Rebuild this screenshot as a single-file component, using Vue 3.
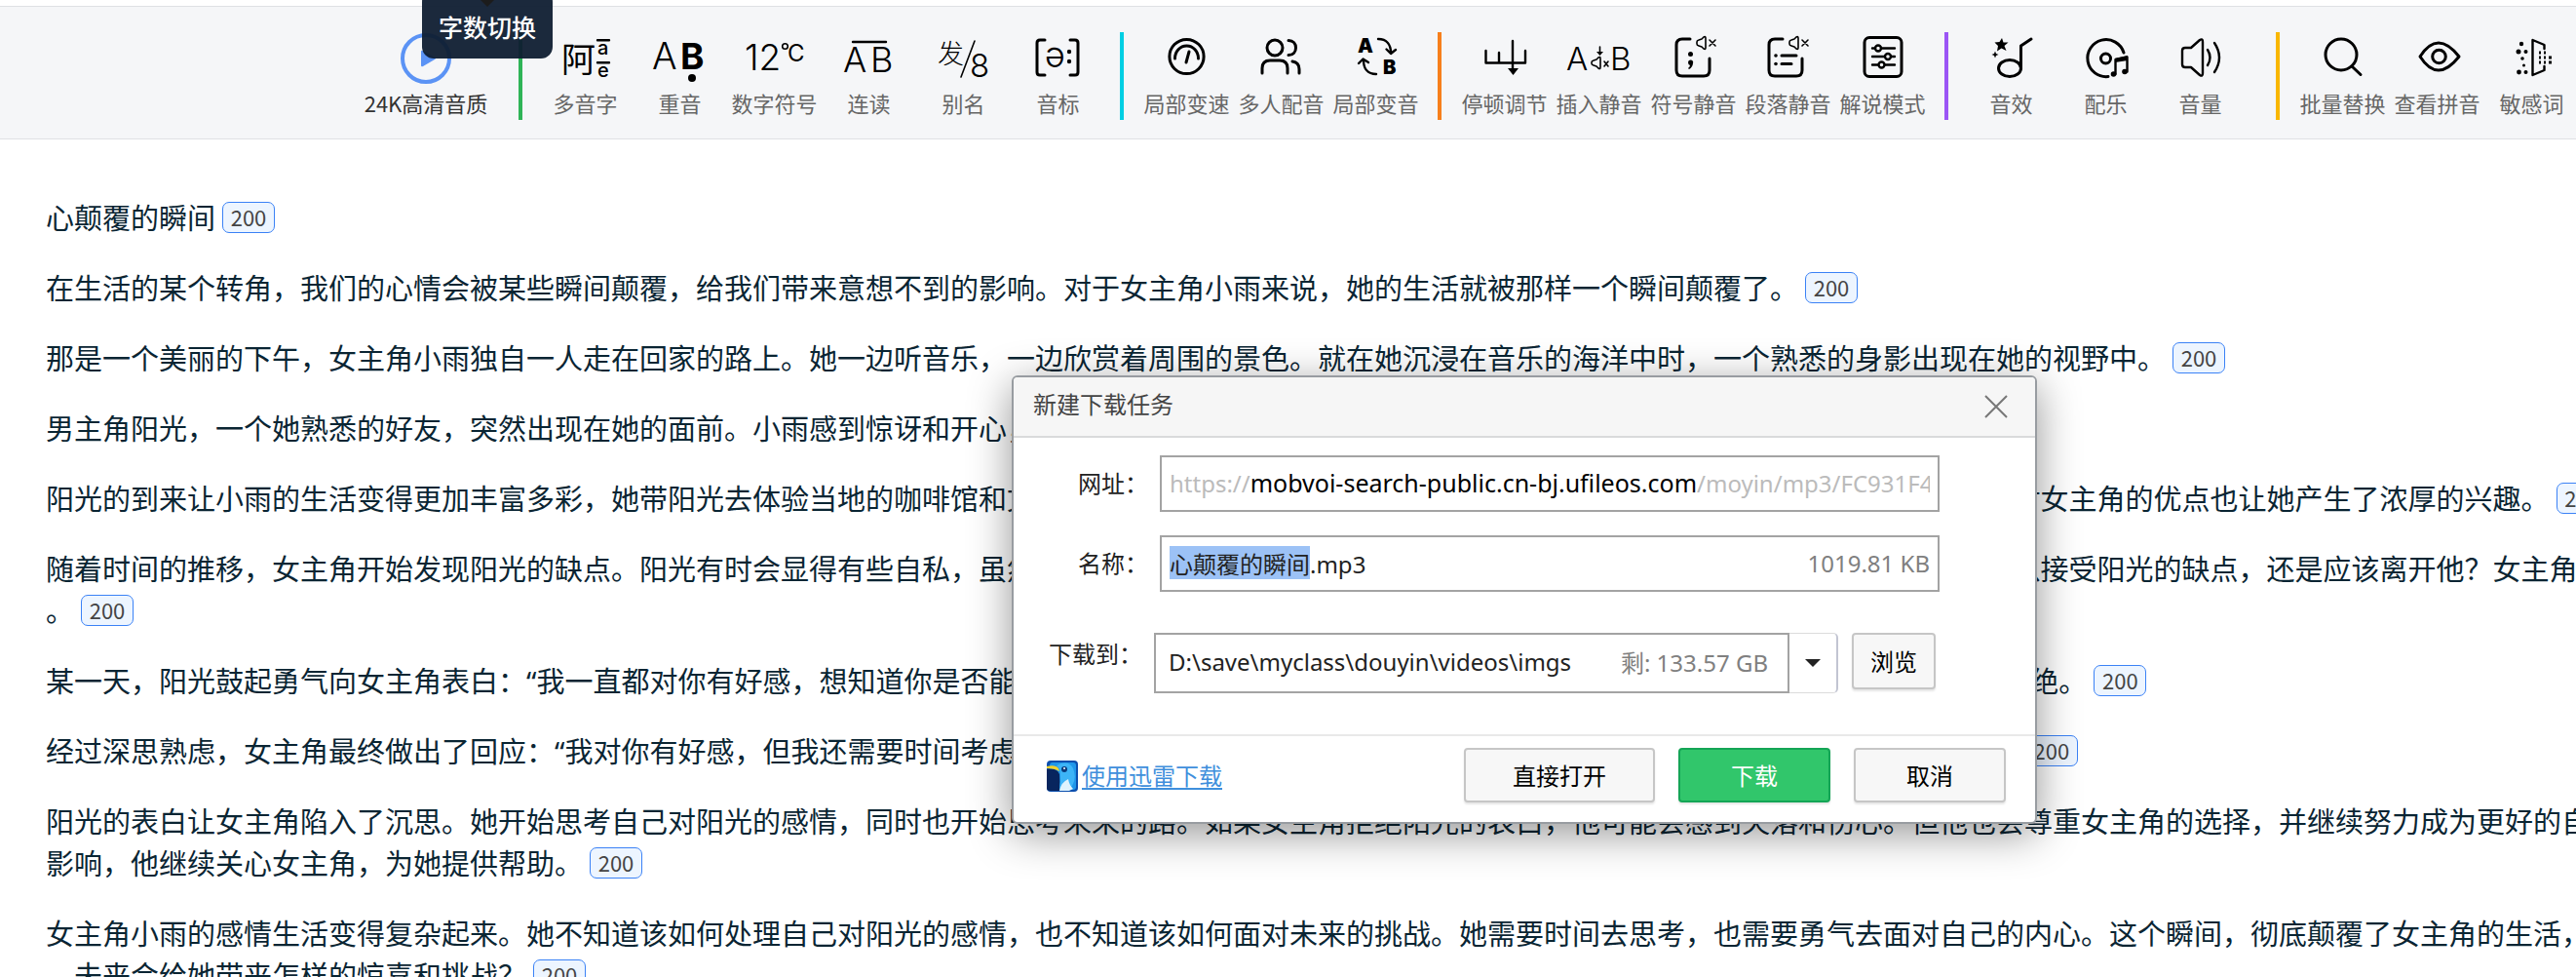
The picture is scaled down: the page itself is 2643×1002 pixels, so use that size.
<script setup>
import { onMounted, ref } from 'vue'

const groups = [
  {
    color: '#2fb457',
    items: [
      { label: '多音字', icon: 'polyphone' },
      { label: '重音', icon: 'stress' },
      { label: '数字符号', icon: 'number' },
      { label: '连读', icon: 'liaison' },
      { label: '别名', icon: 'alias' },
      { label: '音标', icon: 'phonetic' }
    ]
  },
  {
    color: '#00cfe3',
    items: [
      { label: '局部变速', icon: 'speed' },
      { label: '多人配音', icon: 'people' },
      { label: '局部变音', icon: 'voice' }
    ]
  },
  {
    color: '#f77f1c',
    items: [
      { label: '停顿调节', icon: 'pause' },
      { label: '插入静音', icon: 'insert' },
      { label: '符号静音', icon: 'symbol' },
      { label: '段落静音', icon: 'paragraph' },
      { label: '解说模式', icon: 'narrate' }
    ]
  },
  {
    color: '#9b55f5',
    wide: true,
    items: [
      { label: '音效', icon: 'effect' },
      { label: '配乐', icon: 'music' },
      { label: '音量', icon: 'volume' }
    ]
  },
  {
    color: '#f9b700',
    items: [
      { label: '批量替换', icon: 'search' },
      { label: '查看拼音', icon: 'eye' },
      { label: '敏感词', icon: 'filter' }
    ]
  }
]

const paragraphs = [
  ['心颠覆的瞬间'],
  ['在生活的某个转角，我们的心情会被某些瞬间颠覆，给我们带来意想不到的影响。对于女主角小雨来说，她的生活就被那样一个瞬间颠覆了。'],
  ['那是一个美丽的下午，女主角小雨独自一人走在回家的路上。她一边听音乐，一边欣赏着周围的景色。就在她沉浸在音乐的海洋中时，一个熟悉的身影出现在她的视野中。'],
  ['男主角阳光，一个她熟悉的好友，突然出现在她的面前。小雨感到惊讶和开心，他们一起聊天，分享彼此的生活和梦想。'],
  ['阳光的到来让小雨的生活变得更加丰富多彩，她带阳光去体验当地的咖啡馆和文化景点，两个人一起度过了3段美好的时光。她慢慢地开始依赖着他，而阳光面对女主角的优点也让她产生了浓厚的兴趣。'],
  ['随着时间的推移，女主角开始发现阳光的缺点。阳光有时会显得有些自私，虽然他很关心她，但是这1点让她感到困惑。她反复地询问自己的内心，究竟是否可以接受阳光的缺点，还是应该离开他？女主角', '。'],
  ['某一天，阳光鼓起勇气向女主角表白：“我一直都对你有好感，想知道你是否能给我一个机会，和我一起走下去。”女主角感到十分惊讶，她不知道应该接受还是拒绝。'],
  ['经过深思熟虑，女主角最终做出了回应：“我对你有好感，但我还需要时间考虑。我希望我们能先做朋友，再多了解彼此1段时间。”阳光表示理解，愿意等待她。'],
  ['阳光的表白让女主角陷入了沉思。她开始思考自己对阳光的感情，同时也开始思考未来的路。如果女主角拒绝阳光的表白，他可能会感到失落和伤心。但他也会尊重女主角的选择，并继续努力成为更好的自', '影响，他继续关心女主角，为她提供帮助。'],
  ['女主角小雨的感情生活变得复杂起来。她不知道该如何处理自己对阳光的感情，也不知道该如何面对未来的挑战。她需要时间去思考，也需要勇气去面对自己的内心。这个瞬间，彻底颠覆了女主角的生活，', '。未来会给她带来怎样的惊喜和挑战？']
]

const domain = ref('mobvoi-search-public.cn-bj.ufileos.com')
const fileName = ref('心颠覆的瞬间.mp3')
const folder = ref('D:\\save\\myclass\\douyin\\videos\\imgs')
const nameInput = ref(null)

onMounted(() => {
  nameInput.value.focus()
  nameInput.value.setSelectionRange(0, fileName.value.lastIndexOf('.'))
})
</script>

<template>
  <div class="page">
    <header class="toolbar">
      <button class="tool quality" type="button">
        <svg class="icon" viewBox="0 0 60 56">
          <circle cx="30" cy="28" r="24" fill="none" stroke="#5b93f5" stroke-width="4" />
          <path d="M25 21q0-2 2-1l12 7q2 1 0 2l-12 7q-2 1-2-1z" fill="#5b93f5" />
        </svg>
        <span>24K高清音质</span>
      </button>
      <nav v-for="g in groups" :key="g.color" class="group" :class="{ wide: g.wide }">
        <i class="divider" :style="{ background: g.color }"></i>
        <button v-for="t in g.items" :key="t.label" class="tool" type="button">
          <svg class="icon" viewBox="0 0 60 56">
            <g v-if="t.icon === 'polyphone'">
              <text x="5" y="42" class="cjk" font-size="35">阿</text>
              <path d="M42 9.2h12M42 32.2h12" class="s2" />
              <text x="42" y="24" class="med" font-size="20">a</text>
              <text x="42" y="47" class="med" font-size="20">e</text>
            </g>
            <g v-else-if="t.icon === 'stress'">
              <text x="1" y="39" class="thin" font-size="38">A</text>
              <text x="30" y="39" class="bold" font-size="37">B</text>
              <circle cx="42" cy="48" r="4" />
            </g>
            <g v-else-if="t.icon === 'number'">
              <text x="-1" y="40" class="thin" font-size="37">12</text>
              <circle cx="40.500" cy="15.500" r="2.800" class="s1" />
              <text x="43" y="31" class="reg" font-size="24">C</text>
            </g>
            <g v-else-if="t.icon === 'liaison'">
              <path d="M13 11h34" class="s2" />
              <text x="3" y="42" class="thin" font-size="36">A</text>
              <text x="31" y="42" class="thin" font-size="36">B</text>
            </g>
            <g v-else-if="t.icon === 'alias'">
              <text x="3" y="33" class="cjkl" font-size="27">发</text>
              <path d="M41 10L27 47" class="s1" />
              <text x="36" y="47" class="thin" font-size="33">8</text>
            </g>
            <g v-else-if="t.icon === 'phonetic'">
              <path d="M16 9h-5q-3 0-3 3v30q0 3 3 3h5M42 9h5q3 0 3 3v30q0 3-3 3h-5" class="s3" />
              <text x="16" y="37" class="thin" font-size="36">ə</text>
              <circle cx="41" cy="21" r="2.200" /><circle cx="41" cy="31" r="2.200" />
            </g>
            <g v-else-if="t.icon === 'speed'">
              <circle cx="29.500" cy="26" r="17.600" class="s3" />
              <path d="M17.500 28a12 13 0 1 1 24 0M29 32l3-11" class="s3" />
            </g>
            <g v-else-if="t.icon === 'people'">
              <circle cx="23" cy="17" r="8" class="s3" />
              <path d="M10 43v-5q0-8 8-8h10q8 0 8 8v5M37 9.500c10 0 10 15 0 15M41 31q7 1 7 8v4" class="s3" />
            </g>
            <g v-else-if="t.icon === 'voice'">
              <text x="11" y="22" class="black" font-size="20">A</text>
              <text x="37" y="44" class="black" font-size="20">B</text>
              <path d="M32 8c9 0 13 6 13 14M40.500 18.500l4.500 4.500 5-4M30 44c-9 0-13-6-13-14M12 33l4.500-4.500 5.500 3.500" class="s2" />
            </g>
            <g v-else-if="t.icon === 'pause'">
              <path d="M10.500 20v12.500h40.500V20M24 22v10M38 10v30" class="s2" />
              <path d="M33 38h11l-5.500 7z" />
            </g>
            <g v-else-if="t.icon === 'insert'">
              <text x="-4" y="40" class="thin" font-size="33">A</text>
              <text x="41" y="40" class="thin" font-size="33">B</text>
              <path d="M30.500 16v6" class="s1" /><path d="M27 21h7l-3.500 4z" />
              <path d="M22 32q0-1.500 2-2l3-1 2-2q2-1.500 2 1v9q0 2.500-2 1l-2-2-3-1q-2-.500-2-2zM35 31l4 5M39 31l-4 5" class="s1" />
            </g>
            <g v-else-if="t.icon === 'symbol'">
              <path d="M26 8h-8q-6 0-6 6v26q0 6 6 6h22q6 0 6-6V28" class="s3" />
              <circle cx="26.500" cy="23.500" r="2.500" />
              <path d="M24 32a2.600 2.600 0 1 1 5 1q-.500 4-4 6l-1-1q2-1.500 2-3-2-.500-2-3z" />
              <path d="M33 11q0-1.500 2-2l3-1 2-2q2-1 2 1v10q0 2-2 1l-2-2-3-1q-2-.500-2-2zM46 9l6 6M52 9l-6 6" class="s1" />
            </g>
            <g v-else-if="t.icon === 'paragraph'">
              <path d="M24 8h-8q-6 0-6 6v26q0 6 6 6h22q6 0 6-6V28M23 25h15M23 33.500h10" class="s3" />
              <circle cx="17" cy="25" r="1.800" /><circle cx="17" cy="33.500" r="1.800" />
              <path d="M31 11q0-1.500 2-2l3-1 2-2q2-1 2 1v10q0 2-2 1l-2-2-3-1q-2-.500-2-2zM44 9l6 6M50 9l-6 6" class="s1" />
            </g>
            <g v-else-if="t.icon === 'narrate'">
              <rect x="11" y="6.500" width="38" height="40" rx="5" class="s3" />
              <path d="M19 17.500h3M28 17.500h14M19 26h12M38 26h4M19 34.500h6M32 34.500h10" class="s2" />
              <circle cx="25" cy="17.500" r="3" class="s2" /><circle cx="35" cy="26" r="3" class="s2" /><circle cx="28.500" cy="34.500" r="3" class="s2" />
            </g>
            <g v-else-if="t.icon === 'effect'">
              <path d="M20 7l1.500 4.500 5 0-4 3.500 2 5-5-2.500-4.500 3 1-5.500-3.500-3.500 5-.500zM13 20.500l1 2.500 2.500 1-2.500 1-1 2.500-1-2.500-2.500-1 2.500-1z" />
              <ellipse cx="28" cy="38" rx="11.500" ry="8.500" class="s3" />
              <path d="M39.500 38V15l10.500-7" class="s3" />
            </g>
            <g v-else-if="t.icon === 'music'">
              <path d="M48 22A19 19 0 1 0 32 46.500" class="s3" />
              <circle cx="29.500" cy="28" r="5" class="s3" />
              <path d="M39.500 44V29l12-2.500v15" class="s2" />
              <path d="M39 28l13-3v5l-13 2z" />
              <circle cx="37.500" cy="44" r="2.800" /><circle cx="49" cy="41.500" r="2.800" />
            </g>
            <g v-else-if="t.icon === 'volume'">
              <path d="M11 20q0-3 3-3h6l9-8q3-2 3 2v32q0 4-3 2l-9-8h-6q-3 0-3-3zM37 19q5 8 0 16M44 12q10 15 0 30" class="s2" />
            </g>
            <g v-else-if="t.icon === 'search'">
              <circle cx="28" cy="24" r="16" class="s3" /><path d="M39 36l9 8.500" class="s3" />
            </g>
            <g v-else-if="t.icon === 'eye'">
              <path d="M12 26q18-28 40 0-22 28-40 0z" class="s3" /><circle cx="31.500" cy="26" r="6.800" class="s3" />
            </g>
            <g v-else>
              <path d="M42.500 18v-4L30.500 9v36l12-5v-4" class="s2" />
              <circle cx="19" cy="13" r="2.200" /><circle cx="16" cy="21" r="2.500" /><circle cx="23.500" cy="21" r="2" />
              <circle cx="20" cy="28" r="1.800" /><circle cx="21.500" cy="35" r="1.500" /><circle cx="16.500" cy="42" r="2.400" /><circle cx="23.500" cy="42" r="2" />
              <path d="M37 22h2M42 22h2M37 27h2M42 27h2M47 27h3M37 32h2M42 32h2M47 32h3" class="s3f" />
            </g>
          </svg>
          <span>{{ t.label }}</span>
        </button>
      </nav>
      <div class="tooltip" role="tooltip">字数切换</div>
    </header>

    <main class="article">
      <p v-for="(lines, i) in paragraphs" :key="i">
        <span v-for="(line, j) in lines" :key="j" class="line">{{ line }}<b v-if="j === lines.length - 1" class="badge">200</b></span>
      </p>
    </main>

    <section class="dialog" role="dialog" aria-labelledby="dialog-title">
      <div class="head">
        <h2 id="dialog-title">新建下载任务</h2>
        <button class="close" type="button" aria-label="关闭">
          <svg viewBox="0 0 24 24"><path d="M1 1l22 22M23 1L1 23" stroke="#777" stroke-width="2" /></svg>
        </button>
      </div>
      <form class="form" @submit.prevent>
        <div class="row">
          <label for="url">网址：</label>
          <div class="field">
            <span class="faint">https://</span><input id="url" v-model="domain" class="domain" type="text" /><span class="faint">/moyin/mp3/FC931F4</span>
          </div>
        </div>
        <div class="row">
          <label for="name">名称：</label>
          <div class="field">
            <input id="name" ref="nameInput" v-model="fileName" type="text" />
            <span class="note">1019.81 KB</span>
          </div>
        </div>
        <div class="row path">
          <label for="folder">下载到：</label>
          <div class="field">
            <input id="folder" v-model="folder" type="text" />
            <span class="note">剩: 133.57 GB</span>
          </div>
          <button class="drop" type="button" aria-label="选择目录">
            <svg viewBox="0 0 16 8"><path d="M0 0h16L8 8z" fill="#222" /></svg>
          </button>
          <button class="btn browse" type="button">浏览</button>
        </div>
      </form>
      <div class="foot">
        <a href="#" class="thunder">
          <svg viewBox="0 0 32 32">
            <rect width="32" height="32" rx="4" fill="#0b4fae" />
            <rect x="3" y="2" width="27" height="28" rx="3" fill="#1f97ea" />
            <path d="M0 9q10-2 13 5 1 8 0 17H3q-3 0-3-3z" fill="#08255e" />
            <path d="M10 5q12-6 17 3 4 10-1 18l-5 5h-8q1-10 1-17 0-6-4-9z" fill="#3db4f7" />
            <path d="M13 31q2-9 9-12 1 6 5 10l-4 2z" fill="#dff3fd" />
            <path d="M0 6q9-2 12 2l1 3q-5-3-13-3z" fill="#f4d22d" />
            <circle cx="18" cy="9" r="3" fill="#0a3a7c" /><circle cx="18" cy="8" r="1" fill="#fff" />
          </svg>
          <span>使用迅雷下载</span>
        </a>
        <button class="btn open" type="button">直接打开</button>
        <button class="btn primary" type="button">下载</button>
        <button class="btn" type="button">取消</button>
      </div>
    </section>
  </div>
</template>

<style>
body {
  margin: 0;
  background: #fff;
}
</style>

<style scoped>
.page {
  position: relative;
  box-sizing: border-box;
  height: 100vh;
  padding-top: 6px;
  overflow: hidden;
  font-family: "Noto Sans", "Noto Sans CJK SC", sans-serif;
}

button {
  margin: 0;
  padding: 0;
  border: 0;
  background: none;
  font-family: "Noto Sans CJK SC", sans-serif;
}

.toolbar {
  position: relative;
  display: flex;
  height: 135px;
  padding-left: 366px;
  border-top: 1px solid #dfe1e4;
  border-bottom: 1px solid #dfe1e4;
  background: #f5f6f8;
}

.group {
  display: flex;
  flex: none;
  margin-right: 15px;
}

.group.wide {
  margin-right: 29px;
}

.divider {
  flex: none;
  width: 4px;
  height: 90px;
  margin: 26px 16px 0 0;
}

.tool {
  display: flex;
  flex: none;
  flex-direction: column;
  align-items: center;
  width: 97px;
  padding-top: 25px;
  color: #666;
  font-size: 22px;
  line-height: 30px;
  white-space: nowrap;
}

.quality {
  width: 142px;
  margin-right: 24px;
  color: #333;
}

.icon {
  flex: none;
  width: 60px;
  height: 56px;
  margin-bottom: 2px;
  overflow: visible;
}

.s1, .s2, .s3 {
  fill: none;
  stroke: #000;
  stroke-linecap: round;
  stroke-linejoin: round;
}

.s1 { stroke-width: 1.6; }
.s2 { stroke-width: 2.4; }
.s3 { stroke-width: 3; }

.s3f {
  stroke: #000;
  stroke-width: 3;
}

.thin { font-family: Inter, sans-serif; font-weight: 300; }
.reg { font-family: Inter, sans-serif; font-weight: 400; }
.med { font-family: Inter, sans-serif; font-weight: 500; }
.bold { font-family: Inter, sans-serif; font-weight: 700; }
.black { font-family: Inter, sans-serif; font-weight: 900; }
.cjk { font-family: "Noto Sans CJK SC", sans-serif; font-weight: 400; }
.cjkl { font-family: "Noto Sans CJK SC", sans-serif; font-weight: 300; }

.tooltip {
  position: absolute;
  top: -17px;
  left: 433px;
  width: 134px;
  height: 70px;
  border-radius: 12px;
  background: rgba(15, 30, 50, 0.95);
  color: #fff;
  font: 500 25px/74px "Noto Sans CJK SC", sans-serif;
  text-align: center;
}

.tooltip::before {
  content: "";
  position: absolute;
  top: 8px;
  left: 58px;
  border: 9px solid transparent;
  border-top-color: #1c1c1c;
}

.article {
  padding: 59px 0 0 47px;
  color: #0a2533;
  font-size: 29px;
  line-height: 43px;
}

.article p {
  margin: 0 0 29px;
}

.line {
  display: block;
  height: 43px;
  white-space: nowrap;
}

.badge {
  display: inline-block;
  box-sizing: border-box;
  width: 54px;
  height: 32px;
  margin-left: 7px;
  border: 1px solid #3b82f6;
  border-radius: 7px;
  background: #edf5ff;
  color: #444;
  font: 400 22px/28px "Noto Sans CJK SC", sans-serif;
  text-align: center;
  vertical-align: 3px;
}

.dialog {
  position: absolute;
  top: 385px;
  left: 1038px;
  box-sizing: border-box;
  width: 1052px;
  border: 2px solid #989ca1;
  border-radius: 6px;
  background: #fff;
  box-shadow: 0 10px 44px rgba(0, 0, 0, 0.42);
  color: #222;
  font-size: 24px;
  overflow: hidden;
}

.head {
  display: flex;
  align-items: center;
  justify-content: space-between;
  height: 60px;
  padding: 0 28px 0 20px;
  border-bottom: 2px solid #d9dadb;
  background: #f6f6f6;
}

h2 {
  margin: 0;
  padding-bottom: 4px;
  color: #444;
  font-size: 24px;
  font-weight: 400;
  line-height: 56px;
}

.close {
  width: 24px;
  height: 24px;
}

.close svg, .drop svg, .thunder svg {
  display: block;
}

.form {
  padding: 18px 98px 42px 36px;
}

.row {
  display: flex;
  align-items: center;
  margin-bottom: 24px;
}

.row.path {
  margin: 42px 0 0;
  align-items: flex-start;
}

label {
  flex: none;
  box-sizing: border-box;
  width: 114px;
  padding: 0 0 2px 30px;
  font-family: "Noto Sans CJK SC", sans-serif;
  line-height: 42px;
  white-space: nowrap;
}

.path label {
  width: 108px;
  padding-left: 0;
}

.field {
  display: flex;
  flex: 1;
  align-items: center;
  box-sizing: border-box;
  min-width: 0;
  height: 58px;
  padding: 0 8px 2px;
  border: 2px solid #a3a3a3;
  overflow: hidden;
  white-space: nowrap;
}

.path .field {
  height: 62px;
  padding: 0 20px 4px 13px;
}

input {
  flex: 1;
  min-width: 0;
  height: 34px;
  margin: 0;
  padding: 0;
  border: 0;
  outline: 0;
  background: transparent;
  color: #222;
  font-family: "Noto Sans", "Noto Sans CJK SC", sans-serif;
  font-size: 24px;
}

input::selection {
  background: #9cc2f6;
  color: #222;
}

.domain {
  flex: none;
  field-sizing: content;
  color: #000;
  font-size: 25px;
}

.faint {
  color: #bbb;
}

.faint:last-child {
  flex: 1;
  min-width: 0;
  overflow: hidden;
}

.note {
  color: #808080;
}

.drop {
  display: flex;
  flex: none;
  align-items: center;
  justify-content: center;
  width: 50px;
  height: 62px;
  border: solid #dcdcdc;
  border-width: 1px 0;
  border-right: 2px solid #c2c5d2;
  border-radius: 0 5px 5px 0;
}

.drop svg {
  width: 16px;
  height: 8px;
}

.btn {
  flex: none;
  box-sizing: border-box;
  width: 156px;
  height: 56px;
  padding-bottom: 2px;
  border: 2px solid #c6c6c6;
  border-radius: 4px;
  background: #f7f7f7;
  box-shadow: 0 2px 2px rgba(0, 0, 0, 0.1);
  color: #000;
  font-size: 24px;
}

.browse {
  width: 86px;
  height: 58px;
  margin: 0 4px 0 14px;
}

.foot {
  display: flex;
  gap: 24px;
  height: 76px;
  padding: 12px 30px 0 34px;
  border-top: 2px solid #e9e9e9;
}

.thunder {
  display: flex;
  align-items: center;
  gap: 4px;
  height: 58px;
  margin-right: auto;
  color: #3f8fdc;
  text-underline-offset: 3px;
}

.thunder span {
  padding-bottom: 4px;
}

.thunder svg {
  width: 32px;
  height: 32px;
}

.open {
  width: 196px;
}

.primary {
  border-color: #14a556;
  background: #31c66b;
  color: #fff;
}
</style>
